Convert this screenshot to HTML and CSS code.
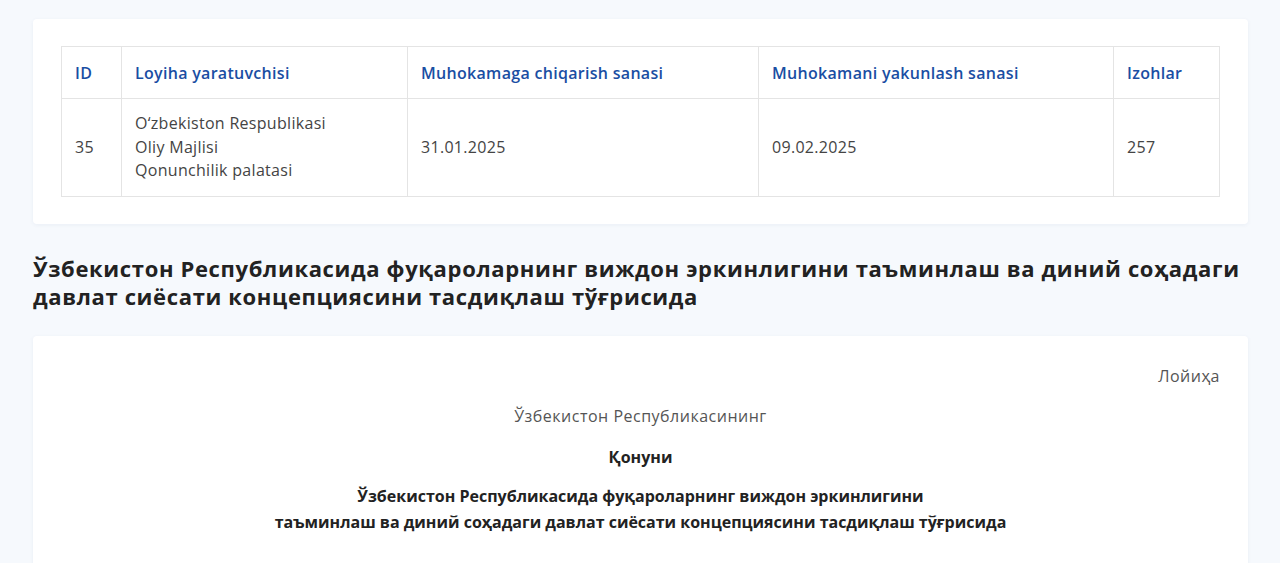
FILE: index.html
```html
<!DOCTYPE html>
<html lang="uz">
<head>
    <meta charset="UTF-8">
    <meta name="viewport" content="width=device-width, initial-scale=1.0">
    <title>Loyiha muhokamasi</title>
    <link rel="stylesheet" href="styles.css">
</head>
<body>
    <div class="page">
        <div class="card info-card">
            <table class="info-table">
                <thead>
                    <tr>
                        <th class="col-id">ID</th>
                        <th class="col-author">Loyiha yaratuvchisi</th>
                        <th class="col-start">Muhokamaga chiqarish sanasi</th>
                        <th class="col-end">Muhokamani yakunlash sanasi</th>
                        <th>Izohlar</th>
                    </tr>
                </thead>
                <tbody>
                    <tr>
                        <td>35</td>
                        <td>O‘zbekiston Respublikasi<br>Oliy Majlisi<br>Qonunchilik palatasi</td>
                        <td>31.01.2025</td>
                        <td>09.02.2025</td>
                        <td>257</td>
                    </tr>
                </tbody>
            </table>
        </div>

        <h1 class="doc-title">Ўзбекистон Республикасида фуқароларнинг виждон эркинлигини таъминлаш ва диний соҳадаги давлат сиёсати концепциясини тасдиқлаш тўғрисида</h1>

        <div class="card doc-card">
            <p class="doc-mark">Лойиҳа</p>
            <p class="doc-center">Ўзбекистон Республикасининг</p>
            <p class="doc-center doc-bold">Қонуни</p>
            <p class="doc-center doc-bold doc-name">Ўзбекистон Республикасида фуқароларнинг виждон эркинлигини<br>таъминлаш ва диний соҳадаги давлат сиёсати концепциясини тасдиқлаш тўғрисида</p>
        </div>
    </div>
</body>
</html>
```

FILE: styles.css
```css
body {
    margin: 0;
    background-color: #f6f9fd;
    font-family: "Open Sans", "Noto Sans", sans-serif;
    color: #333;
}

.page {
    padding: 19px 32px 0 33px;
}

.card {
    background-color: #fff;
    border-radius: 4px;
    box-shadow: 0 1px 4px rgba(30, 60, 120, 0.06);
}

.info-card {
    padding: 27px 28px;
}

.info-table {
    width: 100%;
    border-collapse: collapse;
    font-size: 16px;
    letter-spacing: 0.3px;
}

.info-table th,
.info-table td {
    border: 1px solid #e4e4e4;
    text-align: left;
    padding: 0 13px;
}

.info-table th {
    height: 51px;
    color: #1a4ea3;
    font-weight: 600;
}

.info-table td {
    height: 97px;
    color: #444;
    line-height: 23.5px;
}

.col-id { width: 33px; }
.col-author { width: 259px; }
.col-start { width: 324px; }
.col-end { width: 328px; }

.doc-title {
    margin: 30px 0 26px;
    font-size: 22px;
    line-height: 28px;
    font-weight: 700;
    letter-spacing: 0.65px;
    color: #222;
}

.doc-card {
    padding: 26px 28px 30px;
    min-height: 200px;
    font-size: 16px;
}

.doc-card p {
    margin: 0;
}

.doc-mark {
    text-align: right;
    color: #555;
    line-height: 28px;
    letter-spacing: 0.5px;
}

.doc-center {
    text-align: center;
    color: #555;
    line-height: 26px;
    letter-spacing: 0.5px;
    margin-top: 13px !important;
}

.doc-bold {
    font-weight: 700;
    color: #222;
    letter-spacing: 0;
    margin-top: 15px !important;
}

.doc-name {
    line-height: 26px;
    margin-top: 13px !important;
}
```
